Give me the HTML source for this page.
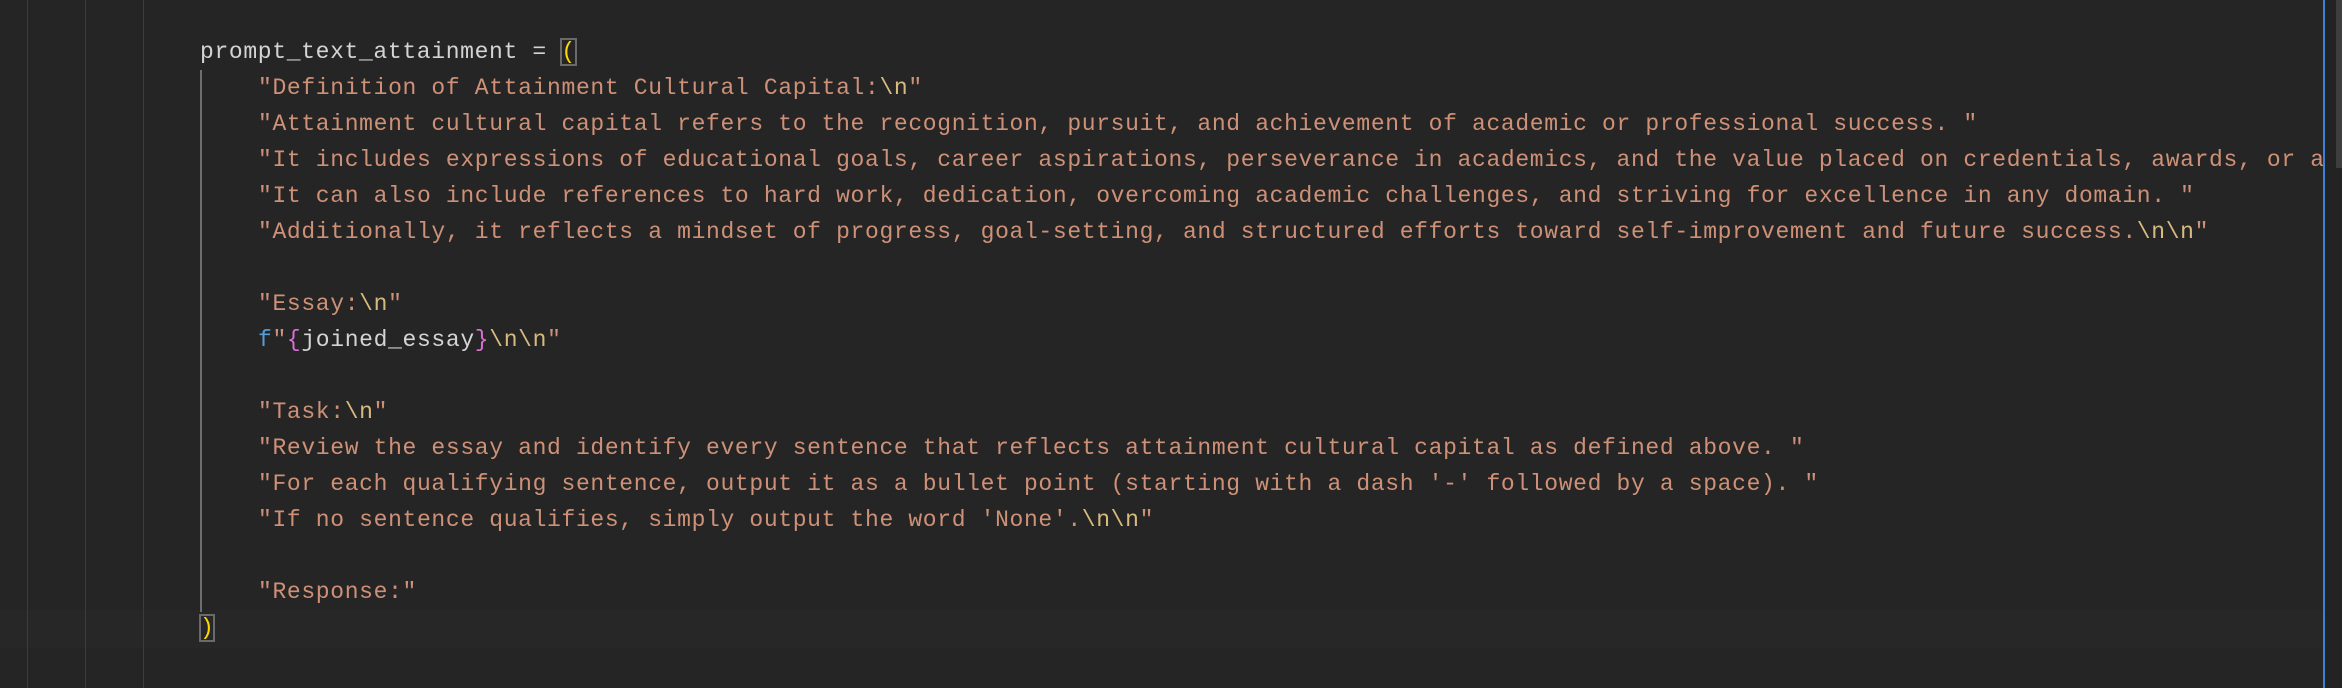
<!DOCTYPE html>
<html><head><meta charset="utf-8"><style>
html,body{margin:0;padding:0;width:2342px;height:688px;overflow:hidden;background:#252525;}
.ed{position:absolute;left:0;top:0;width:2323px;height:688px;overflow:hidden;}
.g{position:absolute;top:0;height:688px;width:1px;background:#3c3c3c;z-index:1}
.ln{position:absolute;left:0;height:36px;line-height:36px;white-space:pre;font-family:"Liberation Mono",monospace;font-size:23px;letter-spacing:0.65px;color:#d4d4d4;z-index:2}
.s{color:#ce9178}.e{color:#d7ba7d}.k{color:#569cd6}.b{color:#da70d6}.y{color:#ffd700}
.box{outline:2px solid #6a6a6a;outline-offset:-1px}
</style></head><body>
<div class="ed">
<div style="position:absolute;left:0;top:610px;width:2323px;height:38px;background:#272727"></div>
<div class="g" style="left:27px"></div>
<div class="g" style="left:85px"></div>
<div class="g" style="left:143px"></div>
<div style="position:absolute;left:200px;top:70px;width:2px;height:542px;background:#6e6e6e;z-index:1"></div>
<div class="ln" style="top:34px;left:200px">prompt_text_attainment = <span class="y box">(</span></div>
<div class="ln" style="top:70px;left:258px"><span class="s">"Definition of Attainment Cultural Capital:</span><span class="e">\n</span><span class="s">"</span></div>
<div class="ln s" style="top:106px;left:258px">"Attainment cultural capital refers to the recognition, pursuit, and achievement of academic or professional success. "</div>
<div class="ln s" style="top:142px;left:258px">"It includes expressions of educational goals, career aspirations, perseverance in academics, and the value placed on credentials, awards, or a</div>
<div class="ln s" style="top:178px;left:258px">"It can also include references to hard work, dedication, overcoming academic challenges, and striving for excellence in any domain. "</div>
<div class="ln" style="top:214px;left:258px"><span class="s">"Additionally, it reflects a mindset of progress, goal-setting, and structured efforts toward self-improvement and future success.</span><span class="e">\n\n</span><span class="s">"</span></div>
<div class="ln" style="top:286px;left:258px"><span class="s">"Essay:</span><span class="e">\n</span><span class="s">"</span></div>
<div class="ln" style="top:322px;left:258px"><span class="k">f</span><span class="s">"</span><span class="b">{</span>joined_essay<span class="b">}</span><span class="e">\n\n</span><span class="s">"</span></div>
<div class="ln" style="top:394px;left:258px"><span class="s">"Task:</span><span class="e">\n</span><span class="s">"</span></div>
<div class="ln s" style="top:430px;left:258px">"Review the essay and identify every sentence that reflects attainment cultural capital as defined above. "</div>
<div class="ln s" style="top:466px;left:258px">"For each qualifying sentence, output it as a bullet point (starting with a dash '-' followed by a space). "</div>
<div class="ln" style="top:502px;left:258px"><span class="s">"If no sentence qualifies, simply output the word 'None'.</span><span class="e">\n\n</span><span class="s">"</span></div>
<div class="ln s" style="top:574px;left:258px">"Response:"</div>
<div class="ln" style="top:610px;left:200px"><span class="y box">)</span></div>
</div>
<div style="position:absolute;left:2323px;top:0;width:2px;height:688px;background:#3b82d6"></div>
<div style="position:absolute;left:2325px;top:0;width:17px;height:688px;background:#232323"></div>
<div style="position:absolute;left:2336px;top:0;width:6px;height:168px;background:#3e3e3e"></div>
</body></html>
